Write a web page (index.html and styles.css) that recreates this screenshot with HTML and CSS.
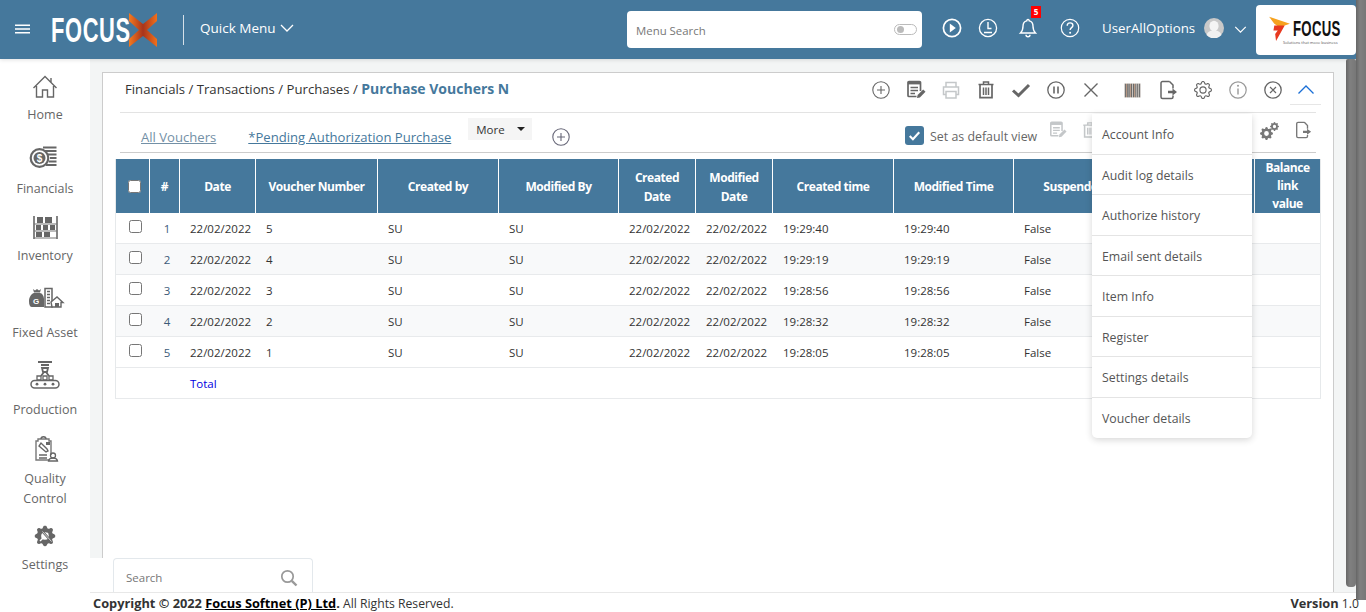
FILE: index.html
```html
<!DOCTYPE html>
<html lang="en">
<head>
<meta charset="utf-8">
<title>Purchase Vouchers N</title>
<link rel="stylesheet" href="styles.css">
</head>
<body>
<svg class="sprite" aria-hidden="true">
  <symbol id="gear-line" viewBox="0 0 16 16"><path d="M8 4.754a3.246 3.246 0 1 0 0 6.492 3.246 3.246 0 0 0 0-6.492zM5.754 8a2.246 2.246 0 1 1 4.492 0 2.246 2.246 0 0 1-4.492 0z"/><path d="M9.796 1.343c-.527-1.79-3.065-1.79-3.592 0l-.094.319a.873.873 0 0 1-1.255.52l-.292-.16c-1.64-.892-3.433.902-2.54 2.541l.159.292a.873.873 0 0 1-.52 1.255l-.319.094c-1.79.527-1.79 3.065 0 3.592l.319.094a.873.873 0 0 1 .52 1.255l-.16.292c-.892 1.64.901 3.434 2.541 2.54l.292-.159a.873.873 0 0 1 1.255.52l.094.319c.527 1.79 3.065 1.79 3.592 0l.094-.319a.873.873 0 0 1 1.255-.52l.292.16c1.64.893 3.434-.902 2.54-2.541l-.159-.292a.873.873 0 0 1 .52-1.255l.319-.094c1.79-.527 1.79-3.065 0-3.592l-.319-.094a.873.873 0 0 1-.52-1.255l.16-.292c.893-1.64-.902-3.433-2.541-2.54l-.292.159a.873.873 0 0 1-1.255-.52l-.094-.319zm-2.633.283c.246-.835 1.428-.835 1.674 0l.094.319a1.873 1.873 0 0 0 2.693 1.115l.291-.16c.764-.415 1.6.42 1.184 1.185l-.159.292a1.873 1.873 0 0 0 1.116 2.692l.318.094c.835.246.835 1.428 0 1.674l-.319.094a1.873 1.873 0 0 0-1.115 2.693l.16.291c.415.764-.42 1.6-1.185 1.184l-.291-.159a1.873 1.873 0 0 0-2.693 1.116l-.094.318c-.246.835-1.428.835-1.674 0l-.094-.319a1.873 1.873 0 0 0-2.692-1.115l-.292.16c-.764.415-1.6-.42-1.184-1.185l.159-.291A1.873 1.873 0 0 0 1.945 8.93l-.319-.094c-.835-.246-.835-1.428 0-1.674l.319-.094A1.873 1.873 0 0 0 3.06 4.377l-.16-.292c-.415-.764.42-1.6 1.185-1.184l.292.159a1.873 1.873 0 0 0 2.692-1.115l.094-.319z"/></symbol>
  <symbol id="gear-fill" viewBox="0 0 16 16"><path d="M9.405 1.05c-.413-1.4-2.397-1.4-2.81 0l-.1.34a1.464 1.464 0 0 1-2.105.872l-.31-.17c-1.283-.698-2.686.705-1.987 1.987l.169.311c.446.82.023 1.841-.872 2.105l-.34.1c-1.4.413-1.4 2.397 0 2.81l.34.1a1.464 1.464 0 0 1 .872 2.105l-.17.31c-.698 1.283.705 2.686 1.987 1.987l.311-.169a1.464 1.464 0 0 1 2.105.872l.1.34c.413 1.4 2.397 1.4 2.81 0l.1-.34a1.464 1.464 0 0 1 2.105-.872l.31.17c1.283.698 2.686-.705 1.987-1.987l-.169-.311a1.464 1.464 0 0 1 .872-2.105l.34-.1c1.4-.413 1.4-2.397 0-2.81l-.34-.1a1.464 1.464 0 0 1-.872-2.105l.17-.31c.698-1.283-.705-2.686-1.987-1.987l-.311.169a1.464 1.464 0 0 1-2.105-.872l-.1-.34zM8 10.93a2.929 2.929 0 1 1 0-5.86 2.929 2.929 0 0 1 0 5.858z"/></symbol>
  <symbol id="plus-circle" viewBox="0 0 20 20"><circle cx="10" cy="10" r="8.200" fill="none" stroke="currentColor" stroke-width="1.100"/><path d="M10 6v8M6 10h8" fill="none" stroke="currentColor" stroke-width="1.100"/></symbol>
  <symbol id="edit" viewBox="0 0 20 20"><path d="M14.500 11V2.500a1 1 0 0 0-1-1H3a1 1 0 0 0-1 1v13a1 1 0 0 0 1 1h7.500" fill="none" stroke="currentColor" stroke-width="1.700"/><path d="M2 3.200h12.500" stroke="currentColor" stroke-width="2.400"/><path d="M4.500 7.500h7.500M4.500 10.500h7.500M4.500 13.500h4.500" stroke="currentColor" stroke-width="1.400"/><path d="M11 18l.6-3 5.600-5.600 2.300 2.300-5.600 5.700z" fill="currentColor"/></symbol>
  <symbol id="trash" viewBox="0 0 20 20"><path d="M2.500 4.500h15M7.500 4.500V2h5v2.500" fill="none" stroke="currentColor" stroke-width="1.500"/><path d="M4 4.500v13.200h12V4.500" fill="none" stroke="currentColor" stroke-width="1.700"/><path d="M7.500 7.500v7.500M10 7.500v7.500M12.500 7.500v7.500" stroke="currentColor" stroke-width="1.500"/></symbol>
  <symbol id="export" viewBox="0 0 20 20"><path d="M11.500 1.500H4.500A1.500 1.500 0 0 0 3 3v14a1.500 1.500 0 0 0 1.500 1.500h9a1.500 1.500 0 0 0 1.500-1.500v-1.500M11.500 1.500l3.500 3.500v3.500" fill="none" stroke="currentColor" stroke-width="1.500"/><path d="M10 10.800h4.500V8.600l4.500 3.400-4.500 3.400v-2.200H10z" fill="currentColor"/></symbol>
</svg>

<header class="topbar">
  <svg class="hamburger" viewBox="0 0 16 10" aria-hidden="true"><path d="M0 1h16M0 5h16M0 9h16" stroke="#fff" stroke-width="1.700"/></svg>
  <div class="brand">
    <span class="brand-word">FOCUS</span>
    <svg class="brand-x" viewBox="0 0 28 34" aria-hidden="true"><defs><linearGradient id="xg" x1="0" x2="1" y1="0" y2="0"><stop offset="0" stop-color="#f47a1f"/><stop offset=".5" stop-color="#a8341c"/><stop offset="1" stop-color="#f0701c"/></linearGradient></defs><path d="M0 0L14 11 28 0V8L18 17 28 26V34L14 23 0 34V26L10 17 0 8Z" fill="url(#xg)"/></svg>
  </div>
  <span class="topbar-divider"></span>
  <button class="quick-menu">Quick Menu<svg viewBox="0 0 14 8" aria-hidden="true"><path d="M1 1l6 6 6-6" fill="none" stroke="#fff" stroke-width="1.300"/></svg></button>
  <div class="menu-search">
    <span class="menu-search-label">Menu Search</span>
    <span class="toggle"><i></i></span>
  </div>
  <div class="top-icons">
    <svg class="ti ti-play" viewBox="0 0 20 20" aria-hidden="true"><circle cx="10" cy="10" r="8.600" fill="none" stroke="#fff" stroke-width="1.700"/><path d="M7.800 5.600l6 4.400-6 4.400z" fill="#fff"/></svg>
    <svg class="ti ti-clock" viewBox="0 0 20 20" aria-hidden="true"><circle cx="10" cy="10" r="8.600" fill="none" stroke="#fff" stroke-width="1.300"/><path d="M10 4v6.500h3.500M6 14.500h8" fill="none" stroke="#fff" stroke-width="1.400"/></svg>
    <span class="ti-bell-wrap">
      <svg class="ti" viewBox="0 0 20 20" aria-hidden="true"><path d="M10 1.500a1.300 1.300 0 0 1 1.300 1.400c2.600.7 3.700 2.900 3.700 5.400 0 3.500.7 5 2.500 6.700H2.500C4.300 13.300 5 11.800 5 8.300c0-2.500 1.100-4.700 3.700-5.400A1.300 1.300 0 0 1 10 1.500zM8 16.800a2 2 0 0 0 4 0" fill="none" stroke="#fff" stroke-width="1.400"/></svg>
      <b class="badge">5</b>
    </span>
    <svg class="ti ti-help" viewBox="0 0 20 20" aria-hidden="true"><circle cx="10" cy="10" r="8.700" fill="none" stroke="#fff" stroke-width="1.200"/><path d="M7.200 7.700c0-1.800 1.300-2.800 2.900-2.800s2.800 1 2.800 2.500c0 2.200-2.800 2.300-2.800 4.600" fill="none" stroke="#fff" stroke-width="1.400"/><circle cx="10.100" cy="14.800" r="1" fill="#fff"/></svg>
  </div>
  <span class="user-name">UserAllOptions</span>
  <svg class="avatar" viewBox="0 0 20 20" aria-hidden="true"><circle cx="10" cy="10" r="10" fill="#c9c9c9"/><ellipse cx="10" cy="8" rx="4.600" ry="5.300" fill="#f4f4f4"/><path d="M2.500 17c1.500-3.500 3.500-4.500 7.500-4.500s6 1 7.500 4.500a10 10 0 0 1-15 0z" fill="#f0f0f0"/></svg>
  <svg class="user-caret" viewBox="0 0 14 8" aria-hidden="true"><path d="M1 1l6 6 6-6" fill="none" stroke="#fff" stroke-width="1.400"/></svg>
  <div class="client-logo">
    <svg viewBox="0 0 24 30" aria-hidden="true"><path d="M0 2l24 8-12 4-6-4z" fill="#f6a21e"/><path d="M6 12h12L8 30l-1-8 3-4H5z" fill="#e8391f"/></svg>
    <div class="client-text"><span class="client-word">FOCUS</span><span class="client-tag">Solutions that move business</span></div>
  </div>
</header>

<div class="workspace">
  <nav class="sidenav">
    <a class="nav-item">
      <svg viewBox="0 0 40 40" aria-hidden="true"><path d="M8.500 23L20 11.500 31.500 23M11.500 21v11h6v-7h5v7h6V21M26 13v5" fill="none" stroke="#666" stroke-width="1.400"/></svg>
      <span>Home</span></a>
    <a class="nav-item">
      <svg viewBox="0 0 40 40" aria-hidden="true"><circle cx="14.500" cy="19" r="8.800" fill="none" stroke="#666" stroke-width="2.200"/><circle cx="14.500" cy="19" r="6" fill="#666"/><text x="14.500" y="22.500" class="dollar">$</text><path d="M18 8.500h13.500M20 12h11.500M23 15.500h8.500M25 19h6.500M24 22.500h7.500M21 26h10.500" stroke="#666" stroke-width="2.200"/></svg>
      <span>Financials</span></a>
    <a class="nav-item">
      <svg viewBox="0 0 40 40" aria-hidden="true"><path d="M9 10v23M32 10v23" stroke="#666" stroke-width="1.600"/><path d="M9 18h23M9 25h23M9 32h23" stroke="#777" stroke-width="1.200"/><path d="M12 11h6v6h-6zM20 11h7v6h-7zM11 19h5v5h-5zM18 19h5v5h-5zM25 19h5v5h-5zM11 26h6v5h-6zM19 26h6v5h-6z" fill="#666"/></svg>
      <span>Inventory</span></a>
    <a class="nav-item">
      <svg viewBox="0 0 40 40" aria-hidden="true"><path d="M8 6l2 1.500 2-1.500 2 1.500L16 6l-1 3.500H9zM4 18c0-4 3-8 5-8h6c2 0 4 3 4 6v8H7c-2 0-3-2-3-6z" fill="#666"/><text x="11" y="21" class="dollar small-g">G</text><path d="M20 5.500h7v18.500h-7z" fill="#fff" stroke="#666" stroke-width="1.500"/><path d="M22 8.500h3M22 11.500h3M22 14.500h3M22 17.500h3M22 20.500h3" stroke="#666" stroke-width="1.500"/><path d="M26 19l6-5 6 5.500h-2v4.500h-9z" fill="#fff" stroke="#666" stroke-width="1.400"/><path d="M30 20h4v4h-4z" fill="#666"/></svg>
      <span>Fixed Asset</span></a>
    <a class="nav-item">
      <svg viewBox="0 0 40 40" aria-hidden="true"><path d="M13 2h14M16 5h8M17 8h6l-1 4h-4zM16 16l3-4M24 16l-3-4" fill="none" stroke="#666" stroke-width="1.800"/><path d="M12 16h4v4h-4zM18 16h4v4h-4zM24 16h4v4h-4z" fill="none" stroke="#666" stroke-width="1.300"/><rect x="6" y="20.500" width="28" height="7.500" rx="3.700" fill="none" stroke="#666" stroke-width="1.500"/><circle cx="12" cy="24.200" r="1.400" fill="#666"/><circle cx="20" cy="24.200" r="1.400" fill="#666"/><circle cx="28" cy="24.200" r="1.400" fill="#666"/></svg>
      <span>Production</span></a>
    <a class="nav-item">
      <svg viewBox="0 0 40 40" aria-hidden="true"><path d="M26 26v-14h-2V10H13v2h-2v19h13" fill="none" stroke="#777" stroke-width="1.400"/><path d="M16 10c0-3 5-3 5 0" fill="none" stroke="#666" stroke-width="1.400"/><path d="M14 17l7 6 2-1-1-2-6-6zM14 26h8M14 29h8" fill="none" stroke="#666" stroke-width="1.400"/><rect x="21" y="13" width="4" height="3" fill="#666"/><circle cx="28" cy="26.500" r="2.500" fill="none" stroke="#666" stroke-width="1.300"/><path d="M23.500 32c.5-2.500 2-3 4.500-3s4 .5 4.500 3z" fill="none" stroke="#666" stroke-width="1.300"/></svg>
      <span>Quality<br>Control</span></a>
    <a class="nav-item">
      <svg viewBox="0 0 40 40" aria-hidden="true"><use href="#gear-fill" x="9.500" y="10.500" width="21" height="21" fill="#666"/><path d="M15 26l8-8" stroke="#fff" stroke-width="1.500"/><path d="M17.500 16.500l9 10" stroke="#666" stroke-width="2.400"/><path d="M17.500 16.500l9 10" stroke="#fff" stroke-width=".7"/></svg>
      <span>Settings</span></a>
  </nav>

  <main class="content">
    <section class="card">
      <div class="title-row">
        <div class="crumbs">Financials / Transactions / Purchases / <strong>Purchase Vouchers N</strong></div>
        <div class="toolbar">
          <span class="tool"><svg><use href="#plus-circle"/></svg></span>
          <span class="tool"><svg><use href="#edit"/></svg></span>
          <span class="tool faded"><svg viewBox="0 0 20 20" aria-hidden="true"><path d="M5 7V2.500h10V7M5 14.500H2.500V7h15v7.500H15M5 11.500h10v6.500H5z" fill="none" stroke="currentColor" stroke-width="1.500"/></svg></span>
          <span class="tool"><svg><use href="#trash"/></svg></span>
          <span class="tool"><svg viewBox="0 0 20 20" aria-hidden="true"><path d="M2 10.500l5.500 5L18 5" fill="none" stroke="currentColor" stroke-width="3"/></svg></span>
          <span class="tool"><svg viewBox="0 0 20 20" aria-hidden="true"><circle cx="10" cy="10" r="8.200" fill="none" stroke="currentColor" stroke-width="1.300"/><path d="M8 6.500v7M12 6.500v7" stroke="currentColor" stroke-width="1.600"/></svg></span>
          <span class="tool"><svg viewBox="0 0 20 20" aria-hidden="true"><path d="M3.500 3.500l13 13M16.500 3.500l-13 13" stroke="currentColor" stroke-width="1.400"/></svg></span>
          <span class="tool tool-split"><svg class="barcode" viewBox="0 0 20 20" aria-hidden="true"><path d="M1.500 2.500h17v15h-17z" fill="#d8d2cc"/><path d="M2.500 3v14M5 3v14M6.500 3v14M9 3v14M11 3v14M13.500 3v14M15.500 3v14M17.500 3v14" stroke="#666" stroke-width="1.100"/><path d="M3.700 3v14M8 3v14M12.200 3v14" stroke="#a9836a" stroke-width=".8"/></svg></span>
          <span class="tool"><svg><use href="#export"/></svg></span>
          <span class="tool"><svg class="gear-line"><use href="#gear-line"/></svg></span>
          <span class="tool faded-mid"><svg viewBox="0 0 20 20" aria-hidden="true"><circle cx="10" cy="10" r="8.200" fill="none" stroke="currentColor" stroke-width="1.200"/><path d="M10 8.500v6" stroke="currentColor" stroke-width="1.400"/><circle cx="10" cy="5.800" r="1" fill="currentColor"/></svg></span>
          <span class="tool"><svg viewBox="0 0 20 20" aria-hidden="true"><circle cx="10" cy="10" r="8.200" fill="none" stroke="currentColor" stroke-width="1.300"/><path d="M7 7l6 6M13 7l-6 6" stroke="currentColor" stroke-width="1.200"/></svg></span>
          <span class="tool tool-up"><svg viewBox="0 0 20 20" aria-hidden="true"><path d="M2.500 13.500L10 6l7.500 7.500" fill="none" stroke="currentColor" stroke-width="1.300"/></svg></span>
        </div>
      </div>

      <div class="tabs-row">
        <a class="tab tab-muted">All Vouchers</a>
        <a class="tab">*Pending Authorization Purchase</a>
        <span class="more">More<i></i></span>
        <svg class="tab-add"><use href="#plus-circle"/></svg>
        <div class="view-tools">
          <span class="checkmark"><svg viewBox="0 0 18 18" aria-hidden="true"><path d="M4.500 9.500l3 3 6-6.500" fill="none" stroke="#fff" stroke-width="2"/></svg></span>
          <span class="default-label">Set as default view</span>
          <svg class="vt vt-edit faded"><use href="#edit"/></svg>
          <svg class="vt vt-trash faded"><use href="#trash"/></svg>
          <svg class="vt vt-gears" viewBox="0 0 20 20" aria-hidden="true"><use href="#gear-fill" x="0" y="6" width="13" height="13"/><use href="#gear-fill" x="10" y="1" width="9" height="9"/></svg>
          <svg class="vt vt-export"><use href="#export"/></svg>
        </div>
      </div>

      <table class="grid">
        <colgroup>
          <col class="w34"><col class="w30"><col class="w76"><col class="w122"><col class="w121"><col class="w120"><col class="w77"><col class="w77"><col class="w121"><col class="w120"><col class="w121"><col class="w120"><col class="w65">
        </colgroup>
        <thead>
          <tr>
            <th><input type="checkbox" class="cb cb-head"></th><th>#</th><th>Date</th><th>Voucher Number</th><th>Created by</th><th>Modified By</th><th>Created Date</th><th>Modified Date</th><th>Created time</th><th>Modified Time</th><th>Suspended</th><th></th><th class="th-stack">Balance<br>link<br>value</th>
          </tr>
        </thead>
        <tbody>
          <tr><td class="c"><input type="checkbox" class="cb"></td><td class="c">1</td><td>22/02/2022</td><td>5</td><td>SU</td><td>SU</td><td>22/02/2022</td><td>22/02/2022</td><td>19:29:40</td><td>19:29:40</td><td>False</td><td></td><td></td></tr>
          <tr><td class="c"><input type="checkbox" class="cb"></td><td class="c">2</td><td>22/02/2022</td><td>4</td><td>SU</td><td>SU</td><td>22/02/2022</td><td>22/02/2022</td><td>19:29:19</td><td>19:29:19</td><td>False</td><td></td><td></td></tr>
          <tr><td class="c"><input type="checkbox" class="cb"></td><td class="c">3</td><td>22/02/2022</td><td>3</td><td>SU</td><td>SU</td><td>22/02/2022</td><td>22/02/2022</td><td>19:28:56</td><td>19:28:56</td><td>False</td><td></td><td></td></tr>
          <tr><td class="c"><input type="checkbox" class="cb"></td><td class="c">4</td><td>22/02/2022</td><td>2</td><td>SU</td><td>SU</td><td>22/02/2022</td><td>22/02/2022</td><td>19:28:32</td><td>19:28:32</td><td>False</td><td></td><td></td></tr>
          <tr><td class="c"><input type="checkbox" class="cb"></td><td class="c">5</td><td>22/02/2022</td><td>1</td><td>SU</td><td>SU</td><td>22/02/2022</td><td>22/02/2022</td><td>19:28:05</td><td>19:28:05</td><td>False</td><td></td><td></td></tr>
          <tr class="total"><td></td><td></td><td class="total-label">Total</td><td></td><td></td><td></td><td></td><td></td><td></td><td></td><td></td><td></td><td></td></tr>
        </tbody>
      </table>

      <ul class="info-menu">
        <li>Account Info</li>
        <li>Audit log details</li>
        <li>Authorize history</li>
        <li>Email sent details</li>
        <li>Item Info</li>
        <li>Register</li>
        <li>Settings details</li>
        <li>Voucher details</li>
      </ul>
    </section>

    <div class="search-dock">
      <div class="search-box">
        <span>Search</span>
        <svg viewBox="0 0 18 18" aria-hidden="true"><circle cx="7.500" cy="7.500" r="5.700" fill="none" stroke="#999" stroke-width="1.700"/><path d="M11.800 11.800l4.700 4.700" stroke="#999" stroke-width="2.400"/></svg>
      </div>
    </div>
  </main>
</div>

<footer class="footer">
  <span class="copyright"><b>Copyright © 2022 <a>Focus Softnet (P) Ltd</a>.</b> All Rights Reserved.</span>
  <span><b>Version</b> 1.0</span>
</footer>

<span class="scrollbar outer"></span>
<span class="scrollbar inner"></span>
</body>
</html>
```
FILE: styles.css
```css
* { box-sizing: border-box; }
html, body { margin: 0; height: 612px; overflow: hidden; }
body {
  font-family: "Open Sans", "Noto Sans", sans-serif;
  font-size: 12px;
  color: #333;
  background: #fff;
  display: flex;
  flex-direction: column;
  position: relative;
}
.sprite { display: none; }

/* top bar */
.topbar {
  height: 59px;
  flex: none;
  background: #45789c;
  display: flex;
  align-items: center;
  color: #fff;
  box-shadow: 0 1px 4px rgba(0,0,0,.12);
  position: relative;
  z-index: 2;
}
.hamburger { width: 15px; height: 10px; margin: -2px 0 0 15px; flex: none; }
.brand { display: flex; align-items: center; margin-left: 21px; width: 132px; flex: none; }
.brand-word {
  font-family: "Liberation Sans", sans-serif;
  font-weight: 700;
  font-size: 35px;
  line-height: 30px;
  display: inline-block;
  width: 71px;
  transform: scaleX(.625);
  transform-origin: left center;
  white-space: nowrap;
  letter-spacing: 1px;
  flex: none;
}
.brand-x { width: 28px; height: 34px; margin-left: 7px; flex: none; }
.topbar-divider { width: 1px; height: 30px; background: #d5e0e8; flex: none; }
.quick-menu {
  all: unset;
  display: flex;
  align-items: center;
  font-size: 13.500px;
  margin: -3px 0 0 16px;
  width: 427px;
  flex: none;
  color: #fff;
}
.quick-menu svg { width: 14px; height: 8px; margin-left: 4px; }
.menu-search {
  width: 295px;
  height: 37px;
  flex: none;
  background: #fff;
  border-radius: 4px;
  color: #777;
  display: flex;
  align-items: center;
  justify-content: space-between;
  padding: 0 5px 0 9px;
}
.menu-search-label { font-size: 11.400px; padding-top: 1px; }
.toggle {
  width: 23px;
  height: 11px;
  border: 1px solid #bbb;
  border-radius: 6px;
  display: flex;
  align-items: center;
  padding-left: 2px;
}
.toggle i { width: 7px; height: 7px; border-radius: 50%; background: #bbb; }
.top-icons { display: flex; align-items: center; width: 180px; flex: none; padding-left: 20px; margin-top: -3px; }
.ti { width: 20px; height: 20px; display: block; flex: none; }
.ti-clock { margin-left: 16px; }
.ti-bell-wrap { position: relative; margin-left: 20px; }
.ti-help { margin-left: 22px; }
.badge {
  position: absolute;
  left: 13px;
  top: -12px;
  width: 10px;
  height: 12px;
  background: #f00;
  color: #fff;
  font-size: 8px;
  line-height: 12px;
  text-align: center;
}
.user-name { font-size: 13.300px; width: 102px; flex: none; margin-top: -4px; }
.avatar { width: 20px; height: 20px; flex: none; margin-top: -3px; }
.user-caret { width: 13px; height: 7px; margin: -1px 0 0 10px; flex: none; }
.client-logo {
  width: 100px;
  height: 50px;
  flex: none;
  margin-left: 9px;
  background: #fff;
  border-radius: 4px;
  display: flex;
  align-items: center;
  padding-left: 12px;
}
.client-logo svg { width: 23px; height: 26px; flex: none; margin-top: -3px; }
.client-text { display: flex; flex-direction: column; align-items: flex-start; margin: 7px 0 0 2px; color: #111; }
.client-word {
  font-family: "Liberation Sans", sans-serif;
  font-weight: 700;
  font-size: 22px;
  line-height: 16px;
  width: 47px;
  display: inline-block;
  transform: scaleX(.6);
  transform-origin: left center;
  letter-spacing: .5px;
}
.client-tag { font-size: 4px; line-height: 5px; color: #555; white-space: nowrap; margin: 3px 0 0 -10px; }

/* workspace */
.workspace { flex: 1; display: flex; min-height: 0; }
.sidenav {
  width: 90px;
  flex: none;
  background: #fff;
  display: grid;
  grid-template-rows: 66px 74px 67px 77px 77px 89px 66px;
  align-content: start;
}
.nav-item {
  display: flex;
  flex-direction: column;
  align-items: center;
  justify-content: flex-end;
  color: #666;
  font-size: 12.500px;
  line-height: 20px;
  text-align: center;
}
.nav-item svg { width: 40px; height: 40px; flex: none; }
.nav-item span { display: block; }
.dollar { font-family: "Liberation Sans", sans-serif; font-weight: 700; font-size: 10px; fill: #fff; text-anchor: middle; }
.small-g { font-size: 8px; }

.content {
  flex: 1;
  background: #f3f5f5;
  position: relative;
  padding: 13px 32px 0 12px;
  min-width: 0;
}
.card {
  background: #fff;
  border: 1px solid #ccc;
  border-bottom: 0;
  height: 520px;
  position: relative;
}
.title-row {
  height: 40px;
  margin: 0 17px;
  border-bottom: 1px solid #e3e3e3;
  display: flex;
  justify-content: space-between;
  align-items: flex-start;
}
.crumbs { font-size: 13.170px; line-height: 32px; margin-left: 5px; color: #333; }
.crumbs strong { color: #45789c; font-size: 14px; }
.toolbar { display: flex; margin-right: -5px; }
.tool {
  width: 35px;
  height: 32px;
  padding-top: 2px;
  display: flex;
  align-items: center;
  justify-content: center;
  color: #666;
}
.tool svg { width: 20px; height: 20px; display: block; }
.tool .gear-line { fill: #666; width: 18px; height: 18px; }
.tool .barcode { width: 19px; height: 19px; }
.tool-split { margin-left: 7px; }
.tool-up { width: 31px; color: #1a6fd6; border-bottom: 1px solid #e6e6e6; }
.faded { color: #c4c7c9; }
.faded-mid { color: #999; }

.tabs-row {
  height: 40px;
  margin: 0 17px;
  border-bottom: 1px solid #ccc;
  display: flex;
  align-items: flex-start;
  position: relative;
  padding-left: 21px;
}
.tab { font-size: 13.100px; line-height: 20px; margin-top: 14px; color: #45789c; text-decoration: underline; margin-right: 32px; white-space: nowrap; }
.tab-muted { color: #7390a6; }
.more {
  width: 64px;
  height: 22px;
  margin: 5px 0 0 -15px;
  background: #f5f5f5;
  display: flex;
  align-items: center;
  padding-left: 8px;
  position: relative;
  flex: none;
  font-size: 11.500px;
}
.more i {
  position: absolute;
  left: 49px;
  top: 9px;
  border: 4px solid transparent;
  border-top-color: #222;
  border-bottom: 0;
}
.tab-add { width: 20px; height: 20px; color: #667; margin: 14px 0 0 19px; flex: none; }
.view-tools {
  margin-left: auto;
  display: flex;
  align-items: flex-start;
  height: 100%;
}
.checkmark { width: 19px; height: 19px; background: #45789c; border-radius: 3px; margin-top: 13px; display: block; flex: none; }
.checkmark svg { width: 19px; height: 19px; display: block; }
.default-label { color: #666; margin: 14px 0 0 6px; line-height: 20px; width: 107px; white-space: nowrap; font-size: 12.400px; }
.vt { width: 18px; height: 18px; flex: none; margin-top: 8px; }
.vt-edit { margin-left: 12px; }
.vt-trash { margin-left: 14px; }
.vt-gears { width: 20px; height: 20px; fill: #777; margin-left: 161px; }
.vt-export { color: #777; margin-left: 14px; margin-right: 4px; }

/* table */
.grid {
  table-layout: fixed;
  border-collapse: separate;
  border-spacing: 0;
  width: 1206px;
  margin: 6px 0 0 12px;
  border-left: 1px solid #e6e9eb;
  border-right: 1px solid #e6e9eb;
}
.w34 { width: 34px; } .w30 { width: 30px; } .w76 { width: 76px; } .w122 { width: 122px; }
.w121 { width: 121px; } .w120 { width: 120px; } .w77 { width: 77px; } .w65 { width: 65px; }
.grid th {
  background: #45789c;
  color: #fff;
  font-size: 12px;
  font-weight: 700;
  letter-spacing: -.45px;
  line-height: 19px;
  height: 54px;
  padding: 1px 2px 0;
  border-right: 1px solid #fff;
  text-align: center;
  vertical-align: middle;
}
.grid th:last-child { border-right: 0; }
.grid th.th-stack { line-height: 18px; padding: 0; }
.grid td {
  height: 31px;
  padding: 0 0 0 10px;
  border-bottom: 1px solid #e8eaec;
  white-space: nowrap;
  color: #333;
  font-size: 11.500px;
}
.grid td.c { padding: 0; text-align: center; color: #3c5a78; }
.grid td.c:nth-child(2) { padding-left: 4px; }
.grid tbody tr:nth-child(even) td { background: #f8f9fa; }
.grid tbody tr.total td { background: #fff; }
.cb { display: block; width: 13px; height: 13px; margin: -3px 0 0 13px; accent-color: #45789c; }
.cb-head { margin: 0 0 0 10px; }
.grid td.total-label { color: #0000e0; }

/* dropdown */
.info-menu {
  position: absolute;
  left: 989px;
  top: 41px;
  width: 160px;
  margin: 0;
  padding: 0;
  list-style: none;
  background: #fff;
  border-radius: 0 0 5px 5px;
  box-shadow: 0 2px 7px rgba(0,0,0,.16);
  color: #555;
  font-size: 12.300px;
  z-index: 3;
}
.info-menu li {
  height: 40.500px;
  line-height: 42px;
  padding-left: 10px;
  border-bottom: 1px solid #e4e4e4;
}
.info-menu li:last-child { border-bottom: 0; }

/* dock */
.search-dock {
  position: absolute;
  left: 0;
  bottom: 0;
  height: 34px;
  width: 224px;
  background: #fff;
  padding-left: 23px;
}
.search-box {
  width: 200px;
  height: 34px;
  border: 1px solid #e3e8ec;
  border-bottom: 0;
  border-radius: 4px 4px 0 0;
  background: #fff;
  display: flex;
  align-items: center;
  justify-content: space-between;
  padding: 4px 14px 0 12px;
  color: #777;
  font-size: 11.500px;
}
.search-box svg { width: 18px; height: 18px; }

.footer {
  height: 20px;
  flex: none;
  margin-left: 90px;
  padding: 1px 7px 0 3px;
  border-top: 1px solid #e8e8e8;
  display: flex;
  align-items: center;
  justify-content: space-between;
  font-size: 12.200px;
  color: #333;
  background: #fff;
  position: relative;
  z-index: 1;
}
.footer b { font-size: 12.800px; }
.footer a { color: #000; text-decoration: underline; }

.scrollbar {
  position: absolute;
  width: 10px;
  background: linear-gradient(to right, #666, #808080 40%, #777);
  z-index: 5;
}
.scrollbar.outer { right: 0; top: 0; height: 600px; }
.scrollbar.inner { right: 10px; top: 59px; height: 528px; border-radius: 2px 2px 4px 4px; }
```
